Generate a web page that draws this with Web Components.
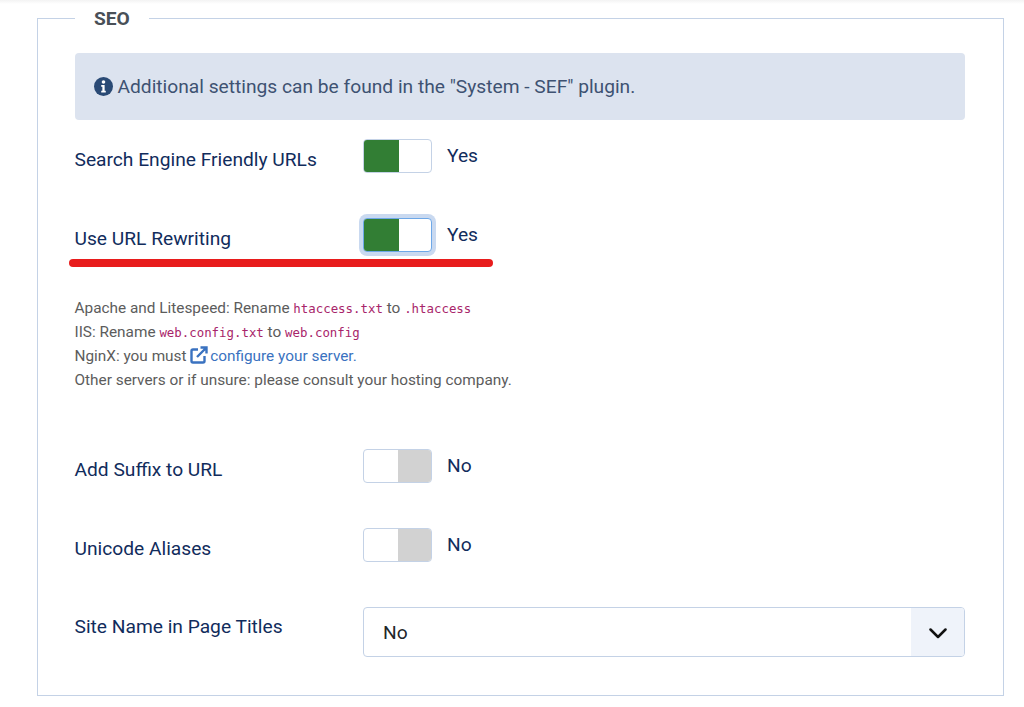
<!DOCTYPE html>
<html lang="en">
<head>
<meta charset="utf-8">
<title>SEO settings</title>
<style>
    html, body { margin: 0; height: 100%; overflow: hidden; }
    body {
        background: linear-gradient(#f3f3f3, #fff 4px);
        font-family: Roboto, "Liberation Sans", sans-serif;
        color: #112c5c;
    }
</style>
</head>
<body>
<seo-panel>
    <info-alert>Additional settings can be found in the "System - SEF" plugin.</info-alert>
    <form-field label="Search Engine Friendly URLs" style="--after: 45px">
        <switch-field value="on"></switch-field>
    </form-field>
    <form-field label="Use URL Rewriting" underlined>
        <switch-field value="on" focused></switch-field>
    </form-field>
    <rewrite-note></rewrite-note>
    <form-field label="Add Suffix to URL" style="--after: 45px">
        <switch-field value="off"></switch-field>
    </form-field>
    <form-field label="Unicode Aliases" style="--after: 45px">
        <switch-field value="off"></switch-field>
    </form-field>
    <form-field label="Site Name in Page Titles" style="--label-top: 7px">
        <select-box value="No"></select-box>
    </form-field>
</seo-panel>

<script>
class SeoPanel extends HTMLElement {
    constructor() {
        super();
        this.attachShadow({ mode: 'open' });
    }
    connectedCallback() {
        this.shadowRoot.innerHTML = `
            <style>
                :host { display: block; padding: 18px 20px 0 37px; }
                .panel {
                    box-sizing: border-box;
                    height: 678px;
                    border: 1px solid #c4d2e6;
                    padding: 34px 38px 0 36.5px;
                    position: relative;
                }
                .legend {
                    position: absolute;
                    left: 37px;
                    top: -11px;
                    height: 22px;
                    padding: 0 19px;
                    background: #fff;
                    font-weight: 700;
                    font-size: 19.2px;
                    line-height: 22px;
                    color: #495057;
                }
            </style>
            <div class="panel">
                <div class="legend">SEO</div>
                <slot></slot>
            </div>`;
    }
}
customElements.define('seo-panel', SeoPanel);

class InfoAlert extends HTMLElement {
    constructor() {
        super();
        this.attachShadow({ mode: 'open' });
    }
    connectedCallback() {
        this.shadowRoot.innerHTML = `
            <style>
                :host {
                    display: flex;
                    align-items: center;
                    gap: 5px;
                    box-sizing: border-box;
                    height: 67px;
                    margin-bottom: 19px;
                    padding: 0 19px;
                    background: #dce3ef;
                    border-radius: 4px;
                    font-size: 19.2px;
                    color: #3e5272;
                }
                svg { width: 19px; height: 19px; flex: none; }
            </style>
            <svg viewBox="0 0 20 20" aria-hidden="true">
                <circle cx="10" cy="10" r="10" fill="#2a4a75"/>
                <circle cx="10" cy="5.3" r="1.9" fill="#fff"/>
                <path d="M7.6 8.4h3.6v6h1.2v1.8H7.6v-1.8h1.2v-4.2H7.6z" fill="#fff"/>
            </svg>
            <span><slot></slot></span>`;
    }
}
customElements.define('info-alert', InfoAlert);

class FormField extends HTMLElement {
    constructor() {
        super();
        this.attachShadow({ mode: 'open' });
    }
    connectedCallback() {
        const mark = this.hasAttribute('underlined') ? '<div class="mark"></div>' : '';
        this.shadowRoot.innerHTML = `
            <style>
                :host {
                    display: grid;
                    grid-template-columns: 288.5px 602px;
                    position: relative;
                    margin-bottom: var(--after, 0);
                }
                .label {
                    padding-top: var(--label-top, 8px);
                    font-size: 19.2px;
                    line-height: 26px;
                    color: #112c5c;
                }
                .mark {
                    position: absolute;
                    left: -5.5px;
                    top: 41px;
                    width: 424px;
                    height: 8px;
                    border-radius: 4px;
                    background: #e81c1c;
                }
            </style>
            <div class="label">${this.getAttribute('label')}</div>
            <div><slot></slot></div>
            ${mark}`;
    }
}
customElements.define('form-field', FormField);

class SwitchField extends HTMLElement {
    constructor() {
        super();
        this.attachShadow({ mode: 'open' });
    }
    connectedCallback() {
        const on = this.getAttribute('value') === 'on';
        this.shadowRoot.innerHTML = `
            <style>
                :host { display: flex; align-items: center; gap: 15px; height: 34px; }
                .track {
                    box-sizing: border-box;
                    display: flex;
                    justify-content: ${on ? 'flex-start' : 'flex-end'};
                    width: 69px;
                    height: 34px;
                    background: #fff;
                    border: 1px solid #c4d2e6;
                    border-radius: 4px;
                    overflow: hidden;
                }
                .track.focused {
                    border-color: #6ea8e8;
                    box-shadow: 0 0 0 4px #c9d9f0;
                }
                .fill { width: ${on ? 35 : 33}px; background: ${on ? '#327e34' : '#d2d2d2'}; }
                .text { font-size: 19.2px; line-height: 26px; color: #112c5c; }
            </style>
            <div class="track ${this.hasAttribute('focused') ? 'focused' : ''}"><div class="fill"></div></div>
            <div class="text">${on ? 'Yes' : 'No'}</div>`;
    }
}
customElements.define('switch-field', SwitchField);

class RewriteNote extends HTMLElement {
    constructor() {
        super();
        this.attachShadow({ mode: 'open' });
    }
    connectedCallback() {
        this.shadowRoot.innerHTML = `
            <style>
                :host {
                    display: block;
                    padding: 44px 0 57px;
                    font-size: 15.36px;
                    line-height: 24px;
                    color: #5c5c5c;
                }
                code {
                    font-family: "DejaVu Sans Mono", "Liberation Mono", monospace;
                    font-size: 12.4px;
                    line-height: 0;
                    color: #a8256a;
                }
                a { color: #3a72c0; text-decoration: none; }
                svg { width: 18px; height: 18px; vertical-align: -3px; margin-right: -2px; }
            </style>
            <div>Apache and Litespeed: Rename <code>htaccess.txt</code> to <code>.htaccess</code></div>
            <div>IIS: Rename <code>web.config.txt</code> to <code>web.config</code></div>
            <div>NginX: you must <a href="#"><svg viewBox="0 0 18 18" fill="none" stroke="#3a72c0" stroke-width="2.400" aria-hidden="true"><path d="M8 3.500H3a1.500 1.500 0 0 0-1.500 1.500v10A1.500 1.500 0 0 0 3 16.500h10a1.500 1.500 0 0 0 1.500-1.500v-5"/><path d="M7 11 16 2M10.500 1.500h6v6"/></svg> configure your server.</a></div>
            <div>Other servers or if unsure: please consult your hosting company.</div>`;
    }
}
customElements.define('rewrite-note', RewriteNote);

class SelectBox extends HTMLElement {
    constructor() {
        super();
        this.attachShadow({ mode: 'open' });
    }
    connectedCallback() {
        this.shadowRoot.innerHTML = `
            <style>
                :host {
                    display: flex;
                    box-sizing: border-box;
                    height: 50px;
                    border: 1px solid #c4d2e6;
                    border-radius: 4px;
                    overflow: hidden;
                    background: #fff;
                    font-size: 19.2px;
                    color: #22262a;
                }
                .value { flex: 1; padding-left: 19px; line-height: 50px; }
                .arrow {
                    display: flex;
                    align-items: center;
                    justify-content: center;
                    width: 53px;
                    padding-top: 2px;
                    background: #eff3fa;
                }
                svg { width: 18px; height: 11px; }
            </style>
            <div class="value">${this.getAttribute('value')}</div>
            <div class="arrow">
                <svg viewBox="0 0 18 11" fill="none" stroke="#111" stroke-width="2.500" stroke-linecap="round" stroke-linejoin="round" aria-hidden="true"><path d="M1.500 1.500 9 9l7.500-7.500"/></svg>
            </div>`;
    }
}
customElements.define('select-box', SelectBox);
</script>
</body>
</html>
